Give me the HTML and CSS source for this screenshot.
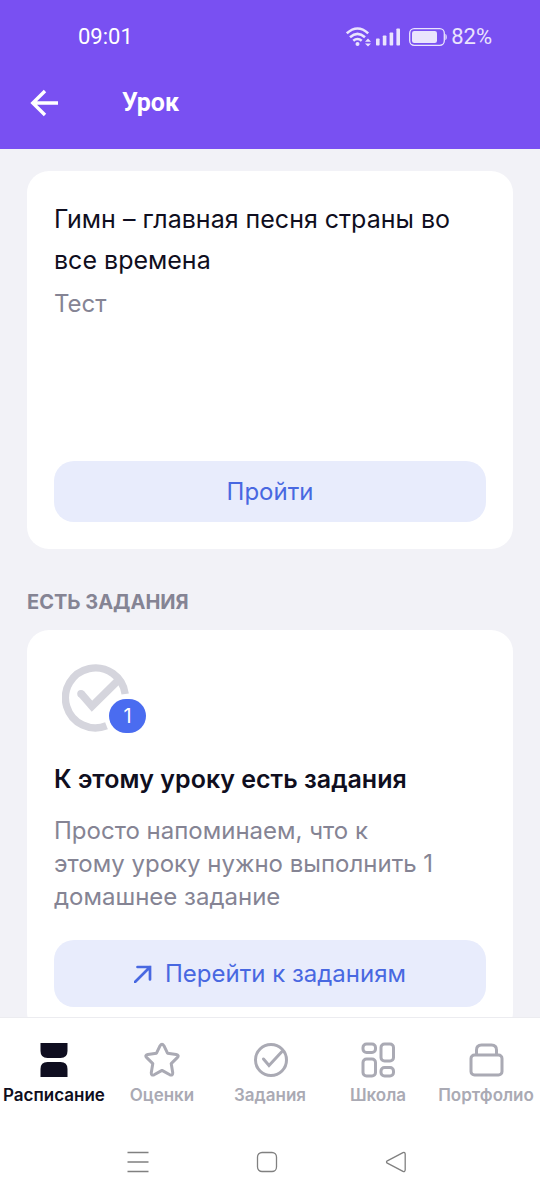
FILE: index.html
```html
<!DOCTYPE html>
<html lang="ru">
<head>
<meta charset="utf-8">
<meta name="viewport" content="width=device-width, initial-scale=1">
<title>Урок</title>
<link rel="stylesheet" href="styles.css">
</head>
<body>
<div class="app">
  <header class="header">
    <div class="status">
      <span class="status-text">09:01</span>
      <div class="status-side">
        <svg class="status-icon" width="26" height="20" viewBox="0 0 26 20" fill="none" stroke="currentColor" stroke-width="2.6" stroke-linecap="butt">
          <path d="M.8 6.4Q11.5-3.4 22.2 6.4M4 10.2q7.500-6.600 15 0M7.300 13.800q4.200-3.600 8.400 0"/>
          <circle cx="11.500" cy="17" r="2" fill="currentColor" stroke="none"/>
          <path d="M19 14.800l3-3.200 3 3.200zM19 16.400l3 3.200 3-3.200z" fill="currentColor" stroke="none"/>
        </svg>
        <svg class="status-icon" width="25" height="18" viewBox="0 0 25 18" fill="currentColor">
          <rect x="0" y="10.500" width="3.600" height="7" rx=".8"/><rect x="6.800" y="7.500" width="3.600" height="10" rx=".8"/><rect x="13.600" y="4.500" width="3.600" height="13" rx=".8"/><rect x="20.400" y=".5" width="3.600" height="17" rx=".8"/>
        </svg>
        <svg class="status-icon battery" width="38" height="18" viewBox="0 0 38 18" fill="currentColor">
          <rect x=".7" y=".7" width="34.600" height="16.600" rx="4.500" fill="none" stroke="currentColor" stroke-width="1.300"/>
          <rect x="3" y="3" width="25" height="12" rx="2.200"/><path d="M36.400 6h.3q1.100.5 1.100 3t-1.100 3h-.3z"/>
        </svg>
        <span class="status-text">82%</span>
      </div>
    </div>
    <div class="toolbar">
      <button class="back" type="button" aria-label="Назад">
        <svg width="28" height="28" viewBox="0 0 28 28" fill="none" stroke="currentColor" stroke-width="3.400"><path d="M15 2 2.800 14 15 26M3 14h25"/></svg>
      </button>
      <h1 class="toolbar-title">Урок</h1>
    </div>
  </header>

  <main class="content">
    <article class="card card-test">
      <h2 class="test-title">Гимн – главная песня страны во все времена</h2>
      <p class="muted">Тест</p>
      <button class="button button-test" type="button">Пройти</button>
    </article>

    <section class="tasks">
      <h2 class="section-title">ЕСТЬ ЗАДАНИЯ</h2>
      <article class="card card-tasks">
        <div class="task-badge">
          <svg width="68" height="68" viewBox="0 0 68 68" fill="none" stroke="#d5d5dd" stroke-width="7.400">
            <path d="M63.200 30A30 30 0 1 0 44.500 61.800"/>
            <path d="M19 29.500 30 42.300 56.500 16" stroke-width="7.600"/><circle cx="19" cy="29.700" r="3.800" fill="#d5d5dd" stroke="none"/>
          </svg>
          <span class="count">1</span>
        </div>
        <h3 class="task-title">К этому уроку есть задания</h3>
        <p class="muted task-text">Просто напоминаем, что к этому уроку нужно выполнить 1 домашнее задание</p>
        <button class="button button-tasks" type="button">
          <svg width="18" height="18" viewBox="0 0 18 18" fill="none" stroke="currentColor" stroke-width="2.700"><path d="M1 17 16 2M3.500 2H16v12.500" stroke-linecap="round"/></svg>
          Перейти к заданиям
        </button>
      </article>
    </section>
  </main>

  <nav class="tabs">
    <a class="tab tab-active" href="#">
      <svg width="36" height="36" viewBox="0 0 36 36" fill="currentColor"><path d="M4.500 1h27v8q0 7-7 7h-13q-7 0-7-7zM4.500 35h27v-8q0-7-7-7h-13q-7 0-7 7z"/></svg>
      <span>Расписание</span>
    </a>
    <a class="tab" href="#">
      <svg width="36" height="36" viewBox="0 0 36 36" fill="none" stroke="currentColor" stroke-width="3" stroke-linejoin="round"><path d="M16.100 3.700q1.900-3 3.800 0l3.600 7.500 8.700 1.200q3.100.7 1.300 3l-6.300 6.200 1.500 9q.2 3.400-2.800 2.200L18 28.400l-7.900 4.400q-3 1.200-2.800-2.200l1.500-9-6.300-6.200q-1.800-2.300 1.300-3l8.700-1.200z"/></svg>
      <span>Оценки</span>
    </a>
    <a class="tab" href="#">
      <svg width="36" height="36" viewBox="0 0 36 36" fill="none" stroke="currentColor" stroke-width="3"><circle cx="19" cy="18" r="15.500"/><path d="M11.500 17l5.500 6.500L30 9.500" stroke-linecap="round"/></svg>
      <span>Задания</span>
    </a>
    <a class="tab" href="#">
      <svg width="36" height="36" viewBox="0 0 36 36" fill="none" stroke="currentColor" stroke-width="3"><rect x="3" y="2" width="12.500" height="8.500" rx="3.500"/><rect x="21" y="2" width="12.500" height="17" rx="3.500"/><rect x="3" y="17" width="12.500" height="17" rx="3.500"/><rect x="21" y="25.500" width="12.500" height="8.500" rx="3.500"/></svg>
      <span>Школа</span>
    </a>
    <a class="tab" href="#">
      <svg width="36" height="36" viewBox="0 0 36 36" fill="none" stroke="currentColor" stroke-width="3"><rect x="3" y="13" width="31" height="20" rx="3.500"/><path d="M8.500 13V8q0-5 5-5h10q5 0 5 5v5"/></svg>
      <span>Портфолио</span>
    </a>
  </nav>

  <div class="system">
    <button class="system-button" type="button" aria-label="Меню"><svg width="22" height="22" viewBox="0 0 22 22" fill="none" stroke="currentColor" stroke-width="1.500"><path d="M.5 1.500h21M.5 11h21M.5 20.500h21"/></svg></button>
    <button class="system-button" type="button" aria-label="Домой"><svg width="22" height="22" viewBox="0 0 22 22" fill="none" stroke="currentColor" stroke-width="1.300"><rect x="1.500" y="1.500" width="19" height="19" rx="4.500"/></svg></button>
    <button class="system-button" type="button" aria-label="Назад"><svg width="22" height="22" viewBox="0 0 22 22" fill="none" stroke="currentColor" stroke-width="1.300" stroke-linejoin="round"><path d="M2.300 9.800 18 1.600q2-.6 2.200 1.400v16q-.2 2-2.200 1.400L2.300 12.200q-1.600-1.200 0-2.400z"/></svg></button>
  </div>
</div>
</body>
</html>
```
FILE: styles.css
```css
* { box-sizing: border-box; }
body, h1, h2, h3, p { margin: 0; }
body { font-family: Inter, "Noto Sans", sans-serif; background: #f2f2f7; color: #0f0e20; }
button { font: inherit; color: inherit; border: 0; padding: 0; background: none; cursor: pointer; }
svg { display: block; flex: none; }

.app { display: flex; flex-direction: column; height: 100vh; }

.header { flex: none; padding-bottom: 16px; background: #7950f2; color: #fff; }
.status { display: flex; align-items: center; justify-content: space-between; height: 73px; padding: 0 48px 0 78px; }
.status-text { font: 400 22px/28px Roboto, sans-serif; }
.status-side { display: flex; align-items: center; gap: 4px; color: #eae4fd; }
.battery { margin-left: 4px; }
.toolbar { display: flex; align-items: center; gap: 64px; height: 60px; padding: 0 30px; }
.toolbar-title { font: 700 25px/32px Roboto, sans-serif; }

.content { flex: 1; min-height: 0; overflow: hidden; padding: 22px 27px 0; }
.card { display: flex; flex-direction: column; align-items: stretch; padding: 27px; background: #fff; border-radius: 22px; }
.card-test { min-height: 378px; }
.test-title { padding-top: 1px; font-size: 25px; font-weight: 400; line-height: 41px; }
.card-test .muted { margin-top: 6px; }
.muted { color: #858494; font-size: 24px; line-height: 33px; }
.button { display: flex; align-items: center; justify-content: center; gap: 13px; border-radius: 20px; background: #e8ecfc; color: #4868e1; font-size: 24px; line-height: 32px; }
.button-test { height: 61px; margin-top: auto; }
.section-title { margin: 37px 0 12px; color: #858494; font-size: 20px; font-weight: 700; line-height: 32px; }
.task-badge { position: relative; width: 92px; height: 76px; padding: 7px 8px 0; }
.count { position: absolute; right: 0; bottom: 0; width: 37px; height: 34px; border-radius: 17px; background: #4a6cf0; color: #fff; font-size: 20px; line-height: 34px; text-align: center; }
.task-title { margin: 28px 0 17px; font-size: 25px; font-weight: 600; line-height: 36px; }
.task-text { padding-right: 44px; }
.button-tasks { height: 67px; margin-top: 27px; }

.tabs { flex: none; display: grid; grid-template-columns: repeat(5, 1fr); padding-top: 24px; height: 107px; border-top: 1px solid #ececf0; background: #fff; }
.tab { display: flex; flex-direction: column; align-items: center; gap: 5px; color: #aaaab4; font-size: 17px; font-weight: 600; line-height: 24px; text-decoration: none; }
.tab-active { color: #0f0e20; }

.system { flex: none; display: flex; justify-content: center; align-items: center; gap: 107px; height: 76px; padding-right: 6px; background: #fff; color: #808080; }
.system-button { width: 22px; height: 22px; }
```
